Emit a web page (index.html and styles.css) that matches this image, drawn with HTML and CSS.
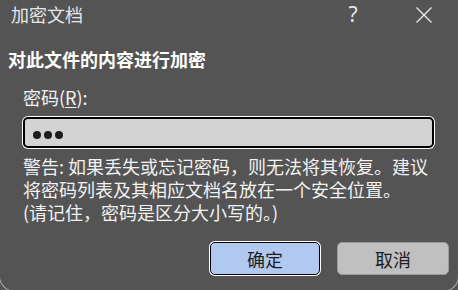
FILE: index.html
```html
<!DOCTYPE html>
<html lang="zh-CN">
<head>
    <meta charset="UTF-8">
    <meta name="viewport" content="width=device-width, initial-scale=1.0">
    <title>加密文档</title>
    <link rel="stylesheet" href="styles.css">
</head>
<body>
    <div class="dialog">
        <div class="titlebar">
            <span class="title">加密文档</span>
            <span class="help">?</span>
            <span class="close">
                <svg width="16" height="16" viewBox="0 0 16 16">
                    <line x1="0.5" y1="0.5" x2="15.5" y2="15.5" stroke="#ececec" stroke-width="1.2"/>
                    <line x1="15.5" y1="0.5" x2="0.5" y2="15.5" stroke="#ececec" stroke-width="1.2"/>
                </svg>
            </span>
        </div>

        <div class="content">
            <h1 class="heading">对此文件的内容进行加密</h1>

            <div class="field">
                <label class="field-label" for="password">密码(<u>R</u>):</label>
                <div class="password" id="password">
                    <span class="dot"></span>
                    <span class="dot"></span>
                    <span class="dot"></span>
                </div>
            </div>

            <div class="warning">
                <p>警告: 如果丢失或忘记密码，则无法将其恢复。建议</p>
                <p>将密码列表及其相应文档名放在一个安全位置。</p>
                <p>(请记住，密码是区分大小写的。)</p>
            </div>

            <div class="buttons">
                <button type="button" class="btn btn-ok">确定</button>
                <button type="button" class="btn btn-cancel">取消</button>
            </div>
        </div>
    </div>
</body>
</html>
```

FILE: styles.css
```css
:root {
    --bg-color: #545454;
    --text-color: #f2f2f2;
    --input-color: #d3d3d3;
    --ok-color: #b1c9f0;
    --cancel-color: #c0c0c0;
    --cancel-border: #9c9c9c;
}

html, body {
    margin: 0;
    padding: 0;
    background-color: var(--bg-color);
    overflow: hidden;
}

body {
    font-family: "Noto Sans CJK SC", "Noto Sans", sans-serif;
    font-size: 18px;
    color: var(--text-color);
}

.dialog {
    margin: 0 -1px;
    height: 292px;
    box-sizing: border-box;
    border: 1px solid #a8a8a8;
    border-top: none;
    border-radius: 0 0 16px 16px;
    background-color: var(--bg-color);
}

.titlebar {
    height: 28px;
    display: flex;
    align-items: center;
    padding: 0 10px 0 11px;
}

.title {
    flex: 1;
    line-height: 28px;
    color: #e6e6e6;
}

.help {
    width: 46px;
    margin-right: 24px;
    text-align: center;
    font-family: "Noto Sans", sans-serif;
    font-size: 21px;
    line-height: 28px;
    color: #e6e6e6;
}

.close {
    width: 48px;
    height: 28px;
    display: flex;
    align-items: center;
    justify-content: center;
    padding-top: 2px;
    box-sizing: border-box;
}

.content {
    padding: 0 9px 0 8px;
}

.heading {
    margin: 19px 0 0;
    font-size: 18px;
    font-weight: bold;
    line-height: 24px;
    color: #ffffff;
}

.field {
    margin: 14px 0 0 15px;
    display: flex;
    flex-direction: column;
    gap: 8px;
}

.field-label {
    line-height: 24px;
}

.field-label u {
    text-underline-offset: 2px;
}

.password {
    width: 411px;
    height: 31px;
    box-sizing: border-box;
    border: 2px solid #000;
    border-radius: 5px;
    box-shadow: 0 0 0 1px #ffffff;
    background-color: var(--input-color);
    display: flex;
    align-items: center;
    gap: 3px;
    padding: 4px 0 0 8px;
}

.dot {
    width: 8px;
    height: 8px;
    border-radius: 50%;
    background-color: #1c1c1c;
}

.warning {
    margin: 8px 0 0 15px;
    display: flex;
    flex-direction: column;
    gap: 3px;
}

.warning p {
    margin: 0;
    line-height: 20px;
}

.buttons {
    margin-top: 20px;
    display: flex;
    justify-content: flex-end;
    gap: 17px;
}

.btn {
    height: 33px;
    border-radius: 5px;
    font-family: "Noto Sans CJK SC", sans-serif;
    font-size: 18px;
    line-height: 1;
    color: #1e1e1e;
    padding: 0;
    box-sizing: border-box;
}

.btn-ok {
    width: 110px;
    background-color: var(--ok-color);
    border: 1.5px solid #000;
    box-shadow: 0 0 0 1px #ffffff;
}

.btn-cancel {
    width: 112px;
    background-color: var(--cancel-color);
    border: 1px solid var(--cancel-border);
}
```
